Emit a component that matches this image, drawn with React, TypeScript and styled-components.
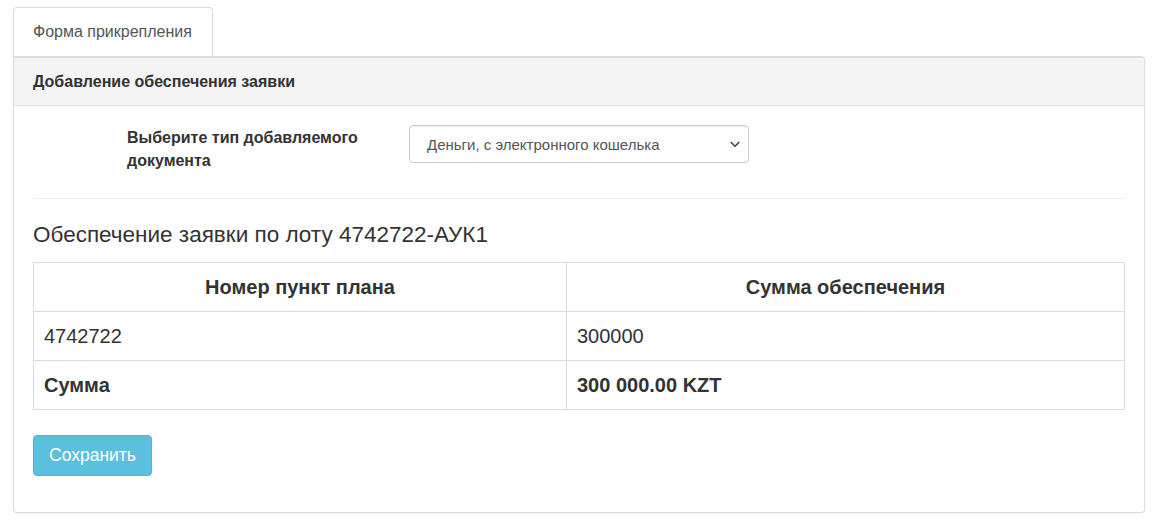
import styled, { createGlobalStyle } from "styled-components"

const GlobalStyle = createGlobalStyle`
  body {
    margin: 0;
    background: #fff;
    font-family: "Liberation Sans", Arial, sans-serif;
    font-size: 14px;
    color: #333;
  }
`

const Page = styled.div`
  padding: 7px 15px 15px 13px;
`

const TabList = styled.div`
  display: flex;
`

const Tab = styled.div`
  width: 200px;
  height: 49px;
  box-sizing: border-box;
  padding-left: 19px;
  display: flex;
  align-items: center;
  border: 1px solid #ddd;
  border-bottom: none;
  border-radius: 4px 4px 0 0;
  color: #555;
  font-size: 16px;
  background: #fff;
`

const Panel = styled.div`
  border: 1px solid #ddd;
  border-top: 2px solid #ddd;
  border-radius: 0 4px 4px 4px;
  box-shadow: 0 1px 1px rgba(0, 0, 0, 0.05);
`

const PanelHeading = styled.div`
  height: 48px;
  box-sizing: border-box;
  padding: 0 19px;
  display: flex;
  align-items: center;
  background: #f4f4f4;
  border-bottom: 1px solid #ddd;
  font-weight: bold;
  font-size: 16px;
`

const PanelBody = styled.div`
  padding: 19px 19px 36px 19px;
`

const FormRow = styled.div`
  display: grid;
  grid-template-columns: 94px 282px 340px;
  align-items: start;
`

const Label = styled.label`
  grid-column: 2;
  font-weight: bold;
  font-size: 16px;
  line-height: 23px;
  padding-top: 1px;
`

const SelectBox = styled.div`
  grid-column: 3;
  height: 38px;
  box-sizing: border-box;
  border: 1px solid #ccc;
  border-radius: 4px;
  display: flex;
  align-items: center;
  justify-content: space-between;
  padding: 0 7px 0 17px;
  font-size: 15px;
  color: #555;
  box-shadow: inset 0 1px 1px rgba(0, 0, 0, 0.075);
`

const Divider = styled.hr`
  border: none;
  border-top: 1px solid #eee;
  margin: 26px 0 20px;
`

const Title = styled.h3`
  margin: 0 0 11px;
  font-size: 22.5px;
  font-weight: normal;
  line-height: 32px;
  color: #333;
`

const Table = styled.table`
  width: 100%;
  border-collapse: collapse;
  font-size: 20px;
`

const Cell = styled.td<{ $head?: boolean; $bold?: boolean }>`
  border: 1px solid #ddd;
  height: 48px;
  padding: 0 10px;
  text-align: ${(p) => (p.$head ? "center" : "left")};
  font-weight: ${(p) => (p.$head || p.$bold ? "bold" : "normal")};
  color: #333;

  &:first-child {
    width: 533px;
    box-sizing: border-box;
  }
`

const Button = styled.button`
  margin-top: 25px;
  height: 41px;
  padding: 0 15px;
  border: 1px solid #46b8da;
  border-radius: 4px;
  background: #5bc0de;
  color: #fff;
  font-family: "Liberation Sans", Arial, sans-serif;
  font-size: 17.5px;
  cursor: pointer;
`

const Chevron = () => (
  <svg width="12" height="12" viewBox="0 0 16 16">
    <path d="M3 6l5 5 5-5" fill="none" stroke="#444" strokeWidth="2.2" strokeLinecap="round" strokeLinejoin="round" />
  </svg>
)

export default function App() {
  return (
    <>
      <GlobalStyle />
      <Page>
        <TabList>
          <Tab>Форма прикрепления</Tab>
        </TabList>
        <Panel>
          <PanelHeading>Добавление обеспечения заявки</PanelHeading>
          <PanelBody>
            <FormRow>
              <Label>Выберите тип добавляемого документа</Label>
              <SelectBox>
                <span>Деньги, с электронного кошелька</span>
                <Chevron />
              </SelectBox>
            </FormRow>
            <Divider />
            <Title>Обеспечение заявки по лоту 4742722-АУК1</Title>
            <Table>
              <tbody>
                <tr>
                  <Cell as="th" $head>Номер пункт плана</Cell>
                  <Cell as="th" $head>Сумма обеспечения</Cell>
                </tr>
                <tr>
                  <Cell>4742722</Cell>
                  <Cell>300000</Cell>
                </tr>
                <tr>
                  <Cell $bold>Сумма</Cell>
                  <Cell $bold>300 000.00 KZT</Cell>
                </tr>
              </tbody>
            </Table>
            <Button>Сохранить</Button>
          </PanelBody>
        </Panel>
      </Page>
    </>
  )
}
